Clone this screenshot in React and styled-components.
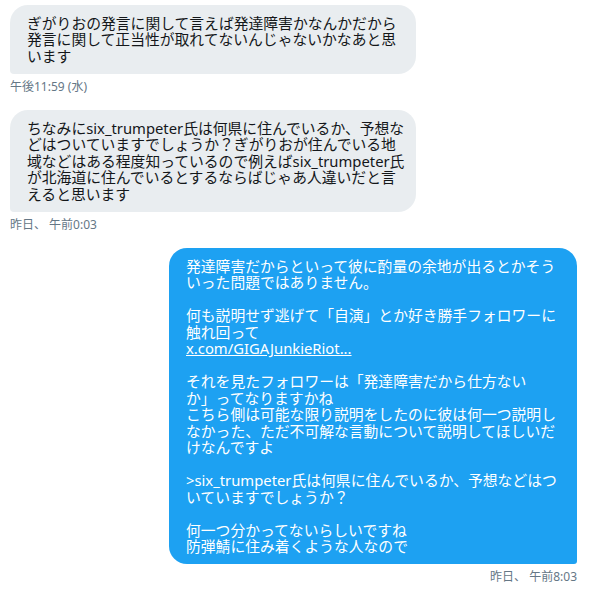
import React from 'react'
import styled, { createGlobalStyle } from 'styled-components'

const GlobalStyle = createGlobalStyle`
  html, body {
    margin: 0;
    background: #ffffff;
  }
  body {
    font-family: "Noto Sans", "Noto Sans CJK JP", sans-serif;
  }
`

const Thread = styled.div`
  display: flex;
  flex-direction: column;
  gap: 16.5px;
  padding: 5px 12px 0 10px;
  width: 589px;
  height: 589px;
  box-sizing: border-box;
  overflow: hidden;
`

const Group = styled.div`
  display: flex;
  flex-direction: column;
  align-items: ${p => (p.sent ? 'flex-end' : 'flex-start')};
  gap: 6px;
`

const Bubble = styled.div`
  box-sizing: border-box;
  width: ${p => (p.sent ? '408px' : '406px')};
  padding: 9.5px 17px 9.5px 17px;
  border-radius: ${p => (p.sent ? '18px 18px 3px 18px' : '18px 18px 18px 4px')};
  background: ${p => (p.sent ? '#1da1f2' : '#e9edf0')};
  color: ${p => (p.sent ? '#ffffff' : '#14171a')};
  font-family: "Noto Sans", "Noto Sans CJK JP", sans-serif;
  font-size: 14.8px;
  line-height: 16.5px;
  white-space: pre;
`

const Link = styled.a`
  color: inherit;
  text-decoration: underline;
`

const Time = styled.div`
  font-family: "Noto Sans", "Noto Sans CJK JP", sans-serif;
  font-size: 12px;
  line-height: 14px;
  color: #657786;
`

const App = () => (
  <>
    <GlobalStyle />
    <Thread>
      <Group>
        <Bubble>
          {'ぎがりおの発言に関して言えば発達障害かなんかだから\n発言に関して正当性が取れてないんじゃないかなあと思\nいます'}
        </Bubble>
        <Time>午後11:59 (水)</Time>
      </Group>
      <Group>
        <Bubble>
          {'ちなみにsix_trumpeter氏は何県に住んでいるか、予想な\nどはついていますでしょうか？ぎがりおが住んでいる地\n域などはある程度知っているので例えばsix_trumpeter氏\nが北海道に住んでいるとするならばじゃあ人違いだと言\nえると思います'}
        </Bubble>
        <Time>昨日、 午前0:03</Time>
      </Group>
      <Group sent>
        <Bubble sent>
          {'発達障害だからといって彼に酌量の余地が出るとかそう\nいった問題ではありません。\n\n何も説明せず逃げて「自演」とか好き勝手フォロワーに\n触れ回って\n'}
          <Link>x.com/GIGAJunkieRiot...</Link>
          {'\n\nそれを見たフォロワーは「発達障害だから仕方ない\nか」ってなりますかね\nこちら側は可能な限り説明をしたのに彼は何一つ説明し\nなかった、ただ不可解な言動について説明してほしいだ\nけなんですよ\n\n>six_trumpeter氏は何県に住んでいるか、予想などはつ\nいていますでしょうか？\n\n何一つ分かってないらしいですね\n防弾鯖に住み着くような人なので'}
        </Bubble>
        <Time>昨日、 午前8:03</Time>
      </Group>
    </Thread>
  </>
)

export default App
